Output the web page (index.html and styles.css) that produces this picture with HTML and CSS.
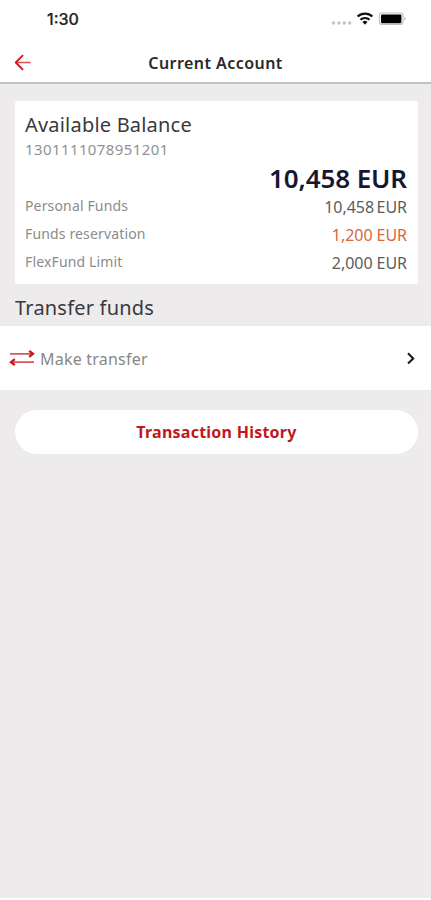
FILE: index.html
```html
<!DOCTYPE html>
<html lang="en">
<head>
<meta charset="utf-8">
<meta name="viewport" content="width=device-width, initial-scale=1">
<title>Current Account</title>
<link rel="stylesheet" href="styles.css">
</head>
<body>
<div class="screen">
  <header class="top">
    <div class="status">
      <span class="time">1:30</span>
      <svg class="status-icons" width="78" height="20" viewBox="0 0 78 20">
        <g fill="#c4c4c4"><circle cx="3.5" cy="14" r="1.7"/><circle cx="8.9" cy="14" r="1.7"/><circle cx="14.3" cy="14" r="1.7"/><circle cx="19.7" cy="14" r="1.7"/></g>
        <g fill="none" stroke="#111" stroke-width="2.1"><path d="M27.6 7.6a10.8 10.8 0 0 1 14.8 0"/><path d="M30.4 10.8a6.6 6.6 0 0 1 9.2 0"/></g>
        <path d="M35 15.8l-2.5-2.7a3.5 3.5 0 0 1 5 0z" fill="#111"/>
        <rect x="49.4" y="4" width="23.6" height="11.4" rx="2.6" fill="#fff" stroke="#bdbdbd" stroke-width="1.1"/>
        <rect x="51" y="5.4" width="20.4" height="8.8" rx="1.2" fill="#000"/>
        <path d="M74.4 7.8q2.2 1.9 0 3.8z" fill="#aaa"/>
      </svg>
    </div>
    <div class="nav">
      <svg class="back" width="18" height="18" viewBox="0 0 18 18" fill="none" stroke-linecap="round" stroke-linejoin="round"><path d="M2.2 8.5H16" stroke="#df5050" stroke-width="1.7"/><path d="M8.6 1.7L1.8 8.5l6.8 6.8" stroke="#d8191b" stroke-width="1.9"/></svg>
      <h1>Current Account</h1>
    </div>
  </header>
  <main>
    <section class="card">
      <h2>Available Balance</h2>
      <p class="number">1301111078951201</p>
      <p class="balance">10,458 EUR</p>
      <dl>
        <div><dt>Personal Funds</dt><dd class="tight">10,458 EUR</dd></div>
        <div><dt>Funds reservation</dt><dd class="orange">1,200 EUR</dd></div>
        <div><dt>FlexFund Limit</dt><dd>2,000 EUR</dd></div>
      </dl>
    </section>
    <h2 class="section-title">Transfer funds</h2>
    <div class="action">
      <svg width="26" height="18" viewBox="0 0 26 18" fill="none"><path d="M1 4.8H23M3 13.2H25" stroke="#d95558" stroke-width="1.7"/><path d="M20.2 1.8L24 4.8L20.2 7.8M5.8 10.2L2 13.2L5.8 16.2" stroke="#c9191e" stroke-width="2.3"/></svg>
      <span>Make transfer</span>
      <svg class="chevron" width="10" height="14" viewBox="0 0 10 14" fill="none" stroke="#1c1c1c" stroke-width="2.1"><path d="M2 2.3L7.2 7.4L2 12.5"/></svg>
    </div>
    <div class="history">Transaction History</div>
  </main>
</div>
</body>
</html>
```
FILE: styles.css
```css
* { box-sizing: border-box; margin: 0; padding: 0; }
body { background: #fff; font-family: "Noto Sans", "Open Sans", sans-serif; }
.screen { height: 898px; background: #edebec; }
.top { height: 84px; background: #fff; border-bottom: 2px solid #c2c1c2; }
.status { height: 43px; display: flex; justify-content: space-between; padding: 9px 23px 0 47px; }
.time { font: 500 16px/20px Inter, sans-serif; color: #222; -webkit-text-stroke: .2px #222; }
.nav { height: 39px; display: grid; grid-template-columns: 50px 1fr 50px; align-items: center; }
.back { margin-left: 14px; }
h1 { font-size: 16px; line-height: 24px; font-weight: 600; letter-spacing: .45px; text-align: center; color: #292929; }
.card { margin: 17px 13px 0 15px; height: 183px; padding: 10px 11px 0 10px; background: #fff; border-radius: 2px; }
h2 { font-size: 20px; line-height: 28px; font-weight: 400; letter-spacing: .2px; color: #39393e; }
.number { font-size: 15px; line-height: 20px; letter-spacing: .4px; color: #929292; }
.balance { margin-top: 4px; font-size: 26px; line-height: 30px; font-weight: 600; text-align: right; letter-spacing: -.1px; color: #17182f; }
dl div { display: flex; justify-content: space-between; height: 28px; line-height: 28px; }
dt { font-size: 14px; line-height: 26px; letter-spacing: .15px; color: #8b8b8b; }
dd { font-size: 16px; letter-spacing: -.05px; color: #5c5c5c; }
.tight { word-spacing: -1.5px; }
.orange { color: #d7683e; }
.section-title { margin: 10px 0 4px 15px; }
.action { height: 64px; padding: 0 15px 0 9px; display: flex; align-items: center; background: #fff; color: #888; font-size: 16px; letter-spacing: .22px; line-height: 24px; }
.action span { margin: 1px 0 0 5px; }
.chevron { margin-left: auto; }
.history { margin: 20px 13px 0 15px; height: 44px; border-radius: 22px; background: #fff; text-align: center; font-size: 16px; line-height: 45px; font-weight: 700; letter-spacing: .24px; color: #c0181d; }
```
